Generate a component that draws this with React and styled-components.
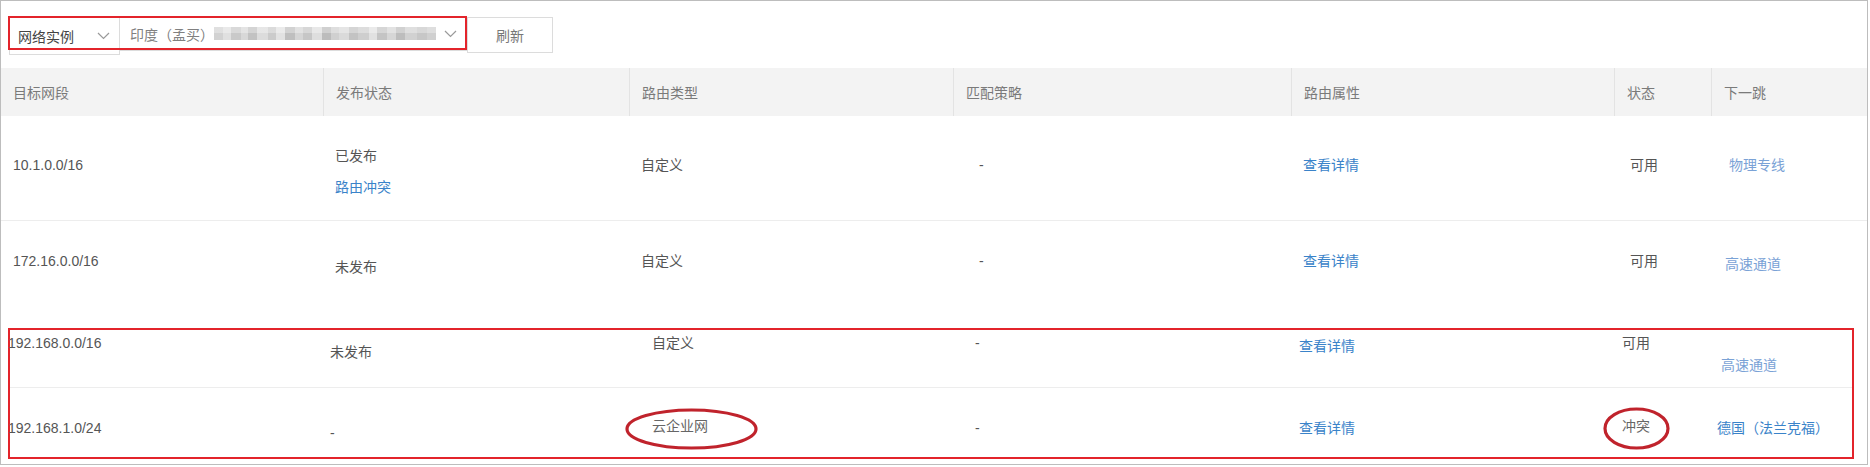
import React from 'react';
import styled, { createGlobalStyle } from 'styled-components';

// frame 1868w 465h
// toolbar 67h, header 48h, rows 105h / 99h, marked block 131h

const GlobalStyle = createGlobalStyle`
  body {
    margin: 0;
    background: #fff;
    font-family: "Liberation Sans", "Noto Sans CJK SC", sans-serif;
  }
`;

const COLS = '322px 306px 324px 338px 323px 97px 1fr';
const MARKED_COLS = '320px 322px 323px 324px 323px 97px 1fr';

const MOSAIC = [
  ['#d2d2d2', 9], ['#e0e0e0', 8], ['#c9c9c9', 10], ['#d8d8d8', 7], ['#c2c2c2', 9],
  ['#dcdcdc', 11], ['#cbcbcb', 8], ['#e2e2e2', 9], ['#bfbfbf', 10], ['#d5d5d5', 8],
  ['#c6c6c6', 9], ['#dedede', 10], ['#bcbcbc', 9], ['#d0d0d0', 8], ['#dadada', 10],
  ['#c3c3c3', 9], ['#cecece', 11], ['#e1e1e1', 8], ['#c4c4c4', 10], ['#d6d6d6', 9],
  ['#bdbdbd', 9], ['#d1d1d1', 12], ['#c7c7c7', 10],
]
  .reduce((acc, [c, w]) => {
    const start = acc.pos;
    acc.pos += w;
    acc.stops.push(`${c} ${start}px ${acc.pos}px`);
    return acc;
  }, { pos: 0, stops: [] })
  .stops.join(', ');

const Frame = styled.div`
  width: 1866px;
  height: 463px;
  border: 1px solid #bdbdbd;
  overflow: hidden;
`;

const Toolbar = styled.div`
  position: relative;
  display: flex;
  align-items: flex-start;
  height: 67px;
  box-sizing: border-box;
  padding: 15px 0 0 8px;
`;

const Select = styled.div`
  display: flex;
  align-items: center;
  box-sizing: border-box;
  width: ${p => p.$w}px;
  height: ${p => p.$h}px;
  border: 1px solid #dcdcdc;
  border-left-width: ${p => (p.$joined ? 0 : 1)}px;
  padding: 0 9px 0 ${p => p.$padLeft}px;
  font-size: 14px;
  color: ${p => (p.$muted ? '#808080' : '#444')};
`;

const SelectLabel = styled.span`
  flex: 1;
  display: flex;
  align-items: center;
  white-space: nowrap;
`;

const Mosaic = styled.span`
  flex: 1;
  height: 13px;
  margin-right: 8px;
  background:
    linear-gradient(to bottom, rgba(255, 255, 255, 0.3) 0 6px, transparent 6px),
    linear-gradient(90deg, ${MOSAIC}, #d0d0d0 0);
`;

const RefreshButton = styled.button`
  width: 86px;
  height: 36px;
  margin-top: 1px;
  border: 1px solid #dcdcdc;
  background: #fff;
  color: #777;
  font-family: inherit;
  font-size: 14px;
  padding: 0;
`;

const RedBox = styled.div`
  position: absolute;
  left: 7px;
  top: 15px;
  width: 459px;
  height: 34px;
  box-sizing: border-box;
  border: 2px solid #e3242b;
  pointer-events: none;
`;

const HeaderRow = styled.div`
  display: grid;
  grid-template-columns: ${COLS};
  height: 48px;
  background: #f3f3f3;
`;

const HeaderCell = styled.div`
  display: flex;
  align-items: center;
  padding-left: 12px;
  font-size: 14px;
  color: #7a7a7a;
  border-left: 1px solid #e3e3e3;

  &:first-child {
    border-left: none;
  }
`;

const Row = styled.div`
  display: grid;
  grid-template-columns: ${p => p.$cols || COLS};
  align-items: start;
  box-sizing: border-box;
  height: ${p => p.$h}px;
  padding-top: ${p => p.$top}px;
  border-bottom: 1px solid ${p => (p.$line ? '#ededed' : 'transparent')};
`;

const Cell = styled.div`
  display: flex;
  flex-direction: column;
  align-items: flex-start;
  gap: 11px;
  padding-left: ${p => (p.$pad === undefined ? 12 : p.$pad)}px;
  margin-top: ${p => p.$dy || 0}px;
  margin-left: ${p => p.$dx || 0}px;
  font-size: 14px;
  line-height: 20px;
  color: #555;
  white-space: nowrap;
`;

const Link = styled.span`
  color: ${p => (p.$soft ? '#7aa2d6' : '#3a83c9')};
`;

const Marked = styled.div`
  margin: 8px 13px 0 7px;
  border: 2px solid #e3242b;
`;

const Ringed = styled.span`
  position: relative;
  display: inline-block;
  color: #666;
`;

const Ring = styled.svg`
  position: absolute;
  left: ${p => p.$x}px;
  top: ${p => p.$y}px;
  width: ${p => p.$w}px;
  height: ${p => p.$h}px;
  overflow: visible;
  filter: blur(0.5px);
`;

function Chevron() {
  return (
    <svg width="13" height="8" viewBox="0 0 13 8">
      <polyline points="1,1 6.5,6.5 12,1" fill="none" stroke="#9a9a9a" strokeWidth="1.2" />
    </svg>
  );
}

function Circled({ children, x, y, w, h }) {
  return (
    <Ringed>
      {children}
      <Ring $x={x} $y={y} $w={w} $h={h} viewBox={`0 0 ${w} ${h}`}>
        <ellipse cx={w / 2} cy={h / 2} rx={w / 2 - 2} ry={h / 2 - 2} fill="none" stroke="#c0232c" strokeWidth="3.2" />
      </Ring>
    </Ringed>
  );
}

const HEADERS = ['目标网段', '发布状态', '路由类型', '匹配策略', '路由属性', '状态', '下一跳'];

export default function App() {
  return (
    <>
      <GlobalStyle />
      <Frame>
        <Toolbar>
          <Select $w={111} $h={39} $padLeft={8}>
            <SelectLabel>网络实例</SelectLabel>
            <Chevron />
          </Select>
          <Select $w={347} $h={35} $padLeft={10} $muted $joined>
            <SelectLabel>
              印度（孟买）
              <Mosaic />
            </SelectLabel>
            <Chevron />
          </Select>
          <RefreshButton>刷新</RefreshButton>
          <RedBox />
        </Toolbar>

        <HeaderRow>
          {HEADERS.map(h => (
            <HeaderCell key={h}>{h}</HeaderCell>
          ))}
        </HeaderRow>

        <Row $h={105} $top={39} $line>
          <Cell>10.1.0.0/16</Cell>
          <Cell $dy={-9}>
            <span>已发布</span>
            <Link>路由冲突</Link>
          </Cell>
          <Cell>自定义</Cell>
          <Cell $dx={14}>-</Cell>
          <Cell><Link>查看详情</Link></Cell>
          <Cell $dx={4}>可用</Cell>
          <Cell $dx={6}><Link $soft>物理专线</Link></Cell>
        </Row>

        <Row $h={99} $top={30}>
          <Cell>172.16.0.0/16</Cell>
          <Cell $dy={6}>未发布</Cell>
          <Cell>自定义</Cell>
          <Cell $dx={14}>-</Cell>
          <Cell><Link>查看详情</Link></Cell>
          <Cell $dx={4}>可用</Cell>
          <Cell $dx={2} $dy={3}><Link $soft>高速通道</Link></Cell>
        </Row>

        <Marked>
          <Row $cols={MARKED_COLS} $h={58} $top={3} $line>
            <Cell $pad={0} $dx={-2}>192.168.0.0/16</Cell>
            <Cell $pad={0} $dy={9}>未发布</Cell>
            <Cell $pad={0}>自定义</Cell>
            <Cell $pad={0}>-</Cell>
            <Cell $pad={0} $dy={3}><Link>查看详情</Link></Cell>
            <Cell $pad={0}>可用</Cell>
            <Cell $pad={0} $dx={2} $dy={22}><Link $soft>高速通道</Link></Cell>
          </Row>
          <Row $cols={MARKED_COLS} $h={69} $top={30}>
            <Cell $pad={0} $dx={-2}>192.168.1.0/24</Cell>
            <Cell $pad={0} $dy={5}>-</Cell>
            <Cell $pad={0} $dy={-2}>
              <Circled x={-27} y={-8} w={133} h={42}>云企业网</Circled>
            </Cell>
            <Cell $pad={0}>-</Cell>
            <Cell $pad={0}><Link>查看详情</Link></Cell>
            <Cell $pad={0} $dy={-2}>
              <Circled x={-19} y={-9} w={67} h={43}>冲突</Circled>
            </Cell>
            <Cell $pad={0} $dx={-2}><Link>德国（法兰克福）</Link></Cell>
          </Row>
        </Marked>
      </Frame>
    </>
  );
}
